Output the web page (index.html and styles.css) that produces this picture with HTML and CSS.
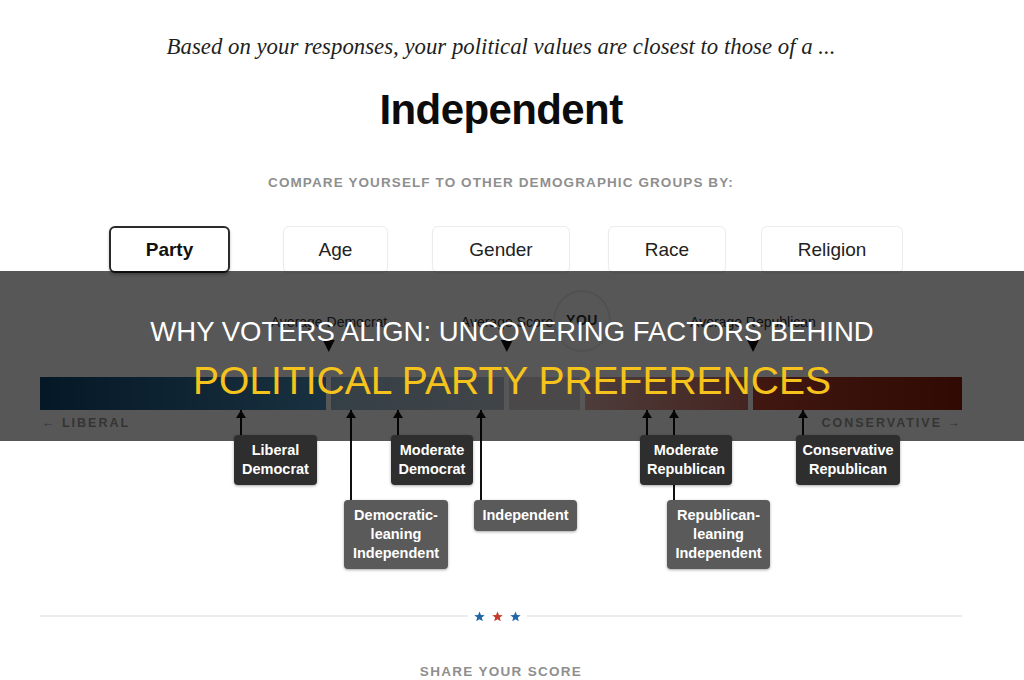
FILE: index.html
```html
<!DOCTYPE html>
<html lang="en">
<head>
<meta charset="utf-8">
<title>Why Voters Align</title>
<link rel="stylesheet" href="styles.css">
</head>
<body>
<main class="page">
  <p class="lead">Based on your responses, your political values are closest to those of a ...</p>
  <h1 class="result">Independent</h1>
  <p class="compare">COMPARE YOURSELF TO OTHER DEMOGRAPHIC GROUPS BY:</p>
  <nav class="tabs">
    <button class="tab tab-party active">Party</button>
    <button class="tab tab-age">Age</button>
    <button class="tab tab-gender">Gender</button>
    <button class="tab tab-race">Race</button>
    <button class="tab tab-religion">Religion</button>
  </nav>

  <section class="chart">
    <div class="marker m-dem"><span class="m-label">Average Democrat</span><span class="m-tri"></span></div>
    <div class="marker m-avg"><span class="m-label">Average Score</span><span class="m-tri"></span></div>
    <div class="marker m-rep"><span class="m-label">Average Republican</span><span class="m-tri"></span></div>
    <div class="you"><span>YOU</span></div>

    <div class="bar">
      <span class="seg seg1"></span>
      <span class="seg seg2"></span>
      <span class="seg seg3"></span>
      <span class="seg seg4"></span>
      <span class="seg seg5"></span>
    </div>
    <div class="axis">
      <span>&larr; LIBERAL</span>
      <span>CONSERVATIVE &rarr;</span>
    </div>

    <div class="node n-libdem"><span class="stem short"></span><span class="box dark">Liberal<br>Democrat</span></div>
    <div class="node n-demlean"><span class="stem long"></span><span class="box mid">Democratic-<br>leaning<br>Independent</span></div>
    <div class="node n-moddem"><span class="stem short"></span><span class="box dark">Moderate<br>Democrat</span></div>
    <div class="node n-ind"><span class="stem long"></span><span class="box mid">Independent</span></div>
    <div class="node n-replean"><span class="stem long"></span><span class="box mid">Republican-<br>leaning<br>Independent</span></div>
    <div class="node n-modrep"><span class="stem short"></span><span class="box dark">Moderate<br>Republican</span></div>
    <div class="node n-conrep"><span class="stem short"></span><span class="box dark">Conservative<br>Republican</span></div>
  </section>

  <div class="divider">
    <span class="rule"></span>
    <span class="stars">
      <svg class="star blue" viewBox="0 0 20 20"><polygon points="10,1 12.6,7.2 19.5,7.6 14.2,12 15.9,18.8 10,15.1 4.1,18.8 5.8,12 0.5,7.6 7.4,7.2"/></svg>
      <svg class="star red" viewBox="0 0 20 20"><polygon points="10,1 12.6,7.2 19.5,7.6 14.2,12 15.9,18.8 10,15.1 4.1,18.8 5.8,12 0.5,7.6 7.4,7.2"/></svg>
      <svg class="star blue" viewBox="0 0 20 20"><polygon points="10,1 12.6,7.2 19.5,7.6 14.2,12 15.9,18.8 10,15.1 4.1,18.8 5.8,12 0.5,7.6 7.4,7.2"/></svg>
    </span>
    <span class="rule rule-right"></span>
  </div>

  <p class="share">SHARE YOUR SCORE</p>
</main>

<div class="banner">
  <p class="banner-line1">WHY VOTERS ALIGN: UNCOVERING FACTORS BEHIND</p>
  <p class="banner-line2">POLITICAL PARTY PREFERENCES</p>
</div>
</body>
</html>
```

FILE: styles.css
```css
* { box-sizing: border-box; }

html, body {
  margin: 0;
  padding: 0;
  background: #ffffff;
  width: 1024px;
  height: 680px;
  overflow: hidden;
}

body {
  position: relative;
  font-family: "Liberation Sans", Arial, sans-serif;
  color: #111;
}

.page {
  width: 922px;
  margin-left: 40px;
  padding-top: 33px;
  display: flex;
  flex-direction: column;
}

.lead {
  margin: 0;
  font-family: "Liberation Serif", "Times New Roman", serif;
  font-style: italic;
  font-size: 22.8px;
  line-height: 28px;
  color: #1f1f1f;
  text-align: center;
}

.result {
  margin: 24px 0 0;
  font-family: "Liberation Sans", Arial, sans-serif;
  font-weight: 700;
  font-size: 42px;
  letter-spacing: -0.6px;
  line-height: 50px;
  text-align: center;
  color: #0c0c0c;
}

.compare {
  margin: 39px 0 0;
  font-size: 13.5px;
  line-height: 18px;
  letter-spacing: 1.1px;
  color: #8f8f8f;
  text-align: center;
  font-weight: 700;
}

.tabs {
  margin-top: 34px;
  display: flex;
  padding-left: 69px;
}

.tab {
  height: 47px;
  border: 1px solid #ececec;
  border-radius: 6px;
  background: #fff;
  font-family: "Liberation Sans", Arial, sans-serif;
  font-size: 19px;
  color: #222;
  padding: 0;
  box-shadow: 0 1px 2px rgba(0,0,0,0.04);
}
.tab-party { width: 121px; }
.tab-age { width: 105px; margin-left: 53px; }
.tab-gender { width: 138px; margin-left: 44px; }
.tab-race { width: 118px; margin-left: 38px; }
.tab-religion { width: 142px; margin-left: 35px; }

.tab.active {
  border: 2px solid #2b2b2b;
  font-weight: 700;
  color: #111;
  box-shadow: 0 2px 3px rgba(0,0,0,0.25);
}

/* chart */
.chart {
  position: relative;
  height: 336px;
  padding-top: 104px;
}

.bar {
  display: flex;
  gap: 5px;
  height: 33px;
}
.seg { display: block; height: 100%; }
.seg1 { width: 286px; background: linear-gradient(90deg, #0f4670, #4a8fbd); }
.seg2 { width: 173px; background: linear-gradient(90deg, #9bbad0, #bcc8d2); }
.seg3 { width: 71px; background: #d8d4d4; }
.seg4 { width: 163px; background: linear-gradient(90deg, #e2b2ac, #c96a5f); }
.seg5 { width: 209px; background: linear-gradient(90deg, #be4633, #8e1d0d); }

.axis {
  display: flex;
  justify-content: space-between;
  margin-top: 5px;
  padding: 0 0 0 2px;
  font-size: 12.5px;
  font-weight: 700;
  letter-spacing: 2px;
  color: #9a9a9a;
  line-height: 16px;
}

.marker {
  position: absolute;
  top: 40px;
  display: flex;
  flex-direction: column;
  align-items: center;
  transform: translateX(-50%);
}
.m-label {
  font-size: 14px;
  line-height: 18px;
  color: #333;
  white-space: nowrap;
}
.m-tri {
  margin-top: 9px;
  width: 0;
  height: 0;
  border-left: 6px solid transparent;
  border-right: 6px solid transparent;
  border-top: 12px solid #111;
}
.m-dem { left: 289px; }
.m-avg { left: 467px; }
.m-rep { left: 713px; }

.you {
  position: absolute;
  left: 513px;
  top: 17px;
  width: 58px;
  height: 62px;
  border: 2px solid #ececec;
  border-radius: 50%;
  display: flex;
  justify-content: center;
  padding-top: 20px;
  font-size: 14px;
  font-weight: 700;
  color: #333;
  letter-spacing: 0.5px;
}

.node {
  position: absolute;
  top: 137px;
  display: flex;
  flex-direction: column;
  align-items: flex-start;
}
.stem {
  position: relative;
  width: 2px;
  margin-left: 6px;
  background: #111;
}
.stem::before {
  content: "";
  position: absolute;
  top: 0;
  left: -4px;
  border-left: 5px solid transparent;
  border-right: 5px solid transparent;
  border-bottom: 8px solid #111;
}
.stem.short { height: 25px; }
.stem.long { height: 90px; }

.box {
  position: relative;
  z-index: 1;
  display: block;
  padding: 6px 4px;
  border-radius: 4px;
  color: #fff;
  font-size: 14.5px;
  font-weight: 700;
  line-height: 19px;
  text-align: center;
  white-space: nowrap;
  box-shadow: 0 1px 3px rgba(0,0,0,0.35);
}
.box.dark { background: #2e2e2e; }
.box.mid { background: #5a5a5a; }

.n-libdem { left: 194px; }
.n-libdem .box { width: 83px; }
.n-moddem { left: 351px; }
.n-moddem .box { width: 82px; }
.n-demlean { left: 304px; }
.n-demlean .box { width: 104px; }
.n-ind { left: 434px; }
.n-ind .box { width: 103px; }
.n-modrep { left: 600px; }
.n-modrep .box { width: 92px; }
.n-replean { left: 627px; }
.n-replean .box { width: 103px; }
.n-conrep { left: 756px; }
.n-conrep .box { width: 104px; }

/* divider */
.divider {
  display: flex;
  align-items: center;
  height: 14px;
}
.rule {
  flex: 1;
  height: 2px;
  background: #ececec;
}
.rule-right { flex: 1.015; }
.stars {
  display: flex;
  gap: 7px;
  padding: 0 6px;
}
.star { width: 11px; height: 11px; display: block; }
.star.blue { fill: #2366a8; }
.star.red { fill: #c73a2c; }

.share {
  margin: 40px 0 0;
  text-align: center;
  font-size: 13.5px;
  font-weight: 700;
  letter-spacing: 1.3px;
  line-height: 18px;
  color: #8f8f8f;
}

/* overlay banner */
.banner {
  position: absolute;
  left: 0;
  top: 271px;
  width: 1024px;
  height: 170px;
  background: rgba(0, 0, 0, 0.66);
  display: flex;
  flex-direction: column;
  align-items: center;
  justify-content: center;
  gap: 10px;
  padding-top: 6px;
}
.banner p {
  margin: 0;
  font-family: "Liberation Sans", Arial, sans-serif;
  white-space: nowrap;
}
.banner-line1 {
  font-size: 27.5px;
  line-height: 34px;
  color: #ffffff;
}
.banner-line2 {
  font-size: 39px;
  line-height: 44px;
  color: #f5c31c;
}
```
